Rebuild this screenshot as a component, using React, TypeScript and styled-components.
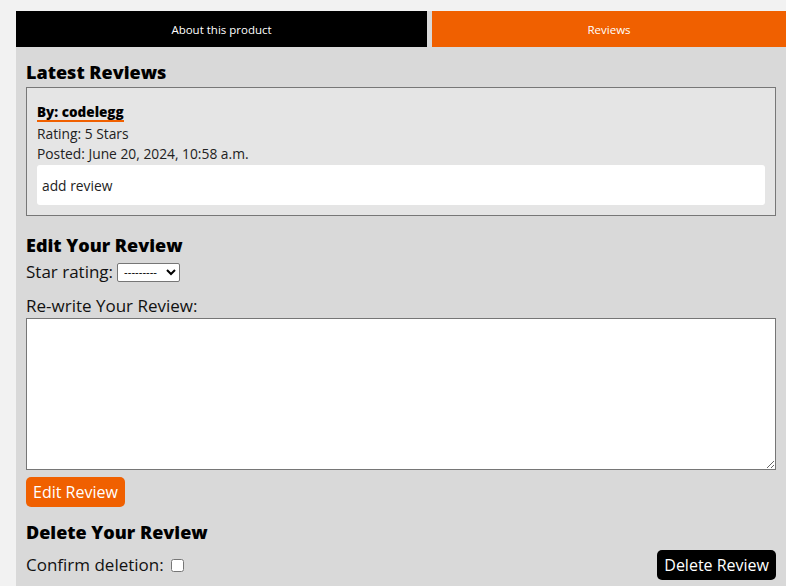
import React from "react";
import styled, { createGlobalStyle } from "styled-components";

const Global = createGlobalStyle`
  html, body { margin: 0; padding: 0; background: #f2f2f2; }
  body { font-family: "Open Sans", "Noto Sans", sans-serif; color: #111; overflow: hidden; }
  * { box-sizing: border-box; }
`;

const Page = styled.div`
  padding: 11px 0 0 16px;
  width: 786px;
`;

const Tabs = styled.div`
  display: flex;
  gap: 5px;
  background: #d9d9d9;
`;

const Tab = styled.div<{ $active?: boolean }>`
  height: 36px;
  display: flex;
  align-items: center;
  justify-content: center;
  font-size: 11.5px;
  color: #fff;
  background: ${(p) => (p.$active ? "#f06000" : "#000")};
  ${(p) => (p.$active ? "flex: 1;" : "width: 411px;")}
`;

const Panel = styled.div`
  background: #d9d9d9;
  padding: 12px 10px 10px 10px;
`;

const Heading = styled.h3<{ $gap?: number }>`
  margin: 0 0 ${(p) => p.$gap ?? 2}px 0;
  font-family: "Open Sans", sans-serif;
  font-weight: 800;
  font-size: 18px;
  line-height: 26px;
  color: #000;
`;

const Card = styled.div`
  border: 1px solid #777;
  background: #e5e5e5;
  padding: 12px 10px 10px 10px;
  margin-bottom: 16px;
`;

const Author = styled.div`
  display: inline-block;
  font-weight: 800;
  font-size: 13.5px;
  line-height: 16px;
  color: #000;
  border-bottom: 2px solid #f06000;
  margin-bottom: 2px;
`;

const Meta = styled.div`
  font-size: 13.8px;
  line-height: 20px;
  color: #222;
`;

const Body = styled.div`
  background: #fff;
  border-radius: 3px;
  padding: 0 5px;
  height: 40px;
  display: flex;
  align-items: center;
  font-size: 13.8px;
  color: #222;
  margin-top: 1px;
`;

const Row = styled.div`
  display: flex;
  align-items: center;
  gap: 4px;
  font-size: 17px;
  line-height: 22px;
  color: #111;
`;

const StarRow = styled(Row)`
  margin-top: 3px;
`;

const Select = styled.select`
  font-size: 11px;
  height: 19px;
  width: 63px;
  border: 1px solid #767676;
  border-radius: 2px;
  background: #fff;
  padding: 0 2px;
`;

const Label = styled.div`
  font-size: 17px;
  line-height: 22px;
  margin: 12px 0 1px;
  color: #111;
`;

const TextArea = styled.textarea`
  display: block;
  width: 750px;
  height: 152px;
  border: 1px solid #767676;
  background: #fff;
  resize: both;
`;

const Button = styled.button<{ $dark?: boolean }>`
  border: none;
  border-radius: 5px;
  height: 30px;
  padding: 0 7px;
  font-family: "Open Sans", sans-serif;
  font-size: 16px;
  color: #fff;
  background: ${(p) => (p.$dark ? "#000" : "#f06000")};
`;

const EditWrap = styled.div`
  margin: 7px 0 12px;
`;

const DeleteRow = styled.div`
  display: flex;
  align-items: center;
  justify-content: space-between;
  margin-top: -1px;
`;

const Check = styled.input`
  width: 13px;
  height: 13px;
  margin: 0 0 0 3px;
`;

export default function App() {
  return (
    <>
      <Global />
      <Page>
        <Tabs>
          <Tab>About this product</Tab>
          <Tab $active>Reviews</Tab>
        </Tabs>
        <Panel>
          <Heading>Latest Reviews</Heading>
          <Card>
            <Author>By: codelegg</Author>
            <Meta>Rating: 5 Stars</Meta>
            <Meta>Posted: June 20, 2024, 10:58 a.m.</Meta>
            <Body>add review</Body>
          </Card>
          <Heading $gap={0}>Edit Your Review</Heading>
          <StarRow>
            Star rating:
            <Select defaultValue="">
              <option value="">---------</option>
            </Select>
          </StarRow>
          <Label>Re-write Your Review:</Label>
          <TextArea />
          <EditWrap>
            <Button>Edit Review</Button>
          </EditWrap>
          <Heading $gap={6}>Delete Your Review</Heading>
          <DeleteRow>
            <Row>
              Confirm deletion:
              <Check type="checkbox" />
            </Row>
            <Button $dark>Delete Review</Button>
          </DeleteRow>
        </Panel>
      </Page>
    </>
  );
}
